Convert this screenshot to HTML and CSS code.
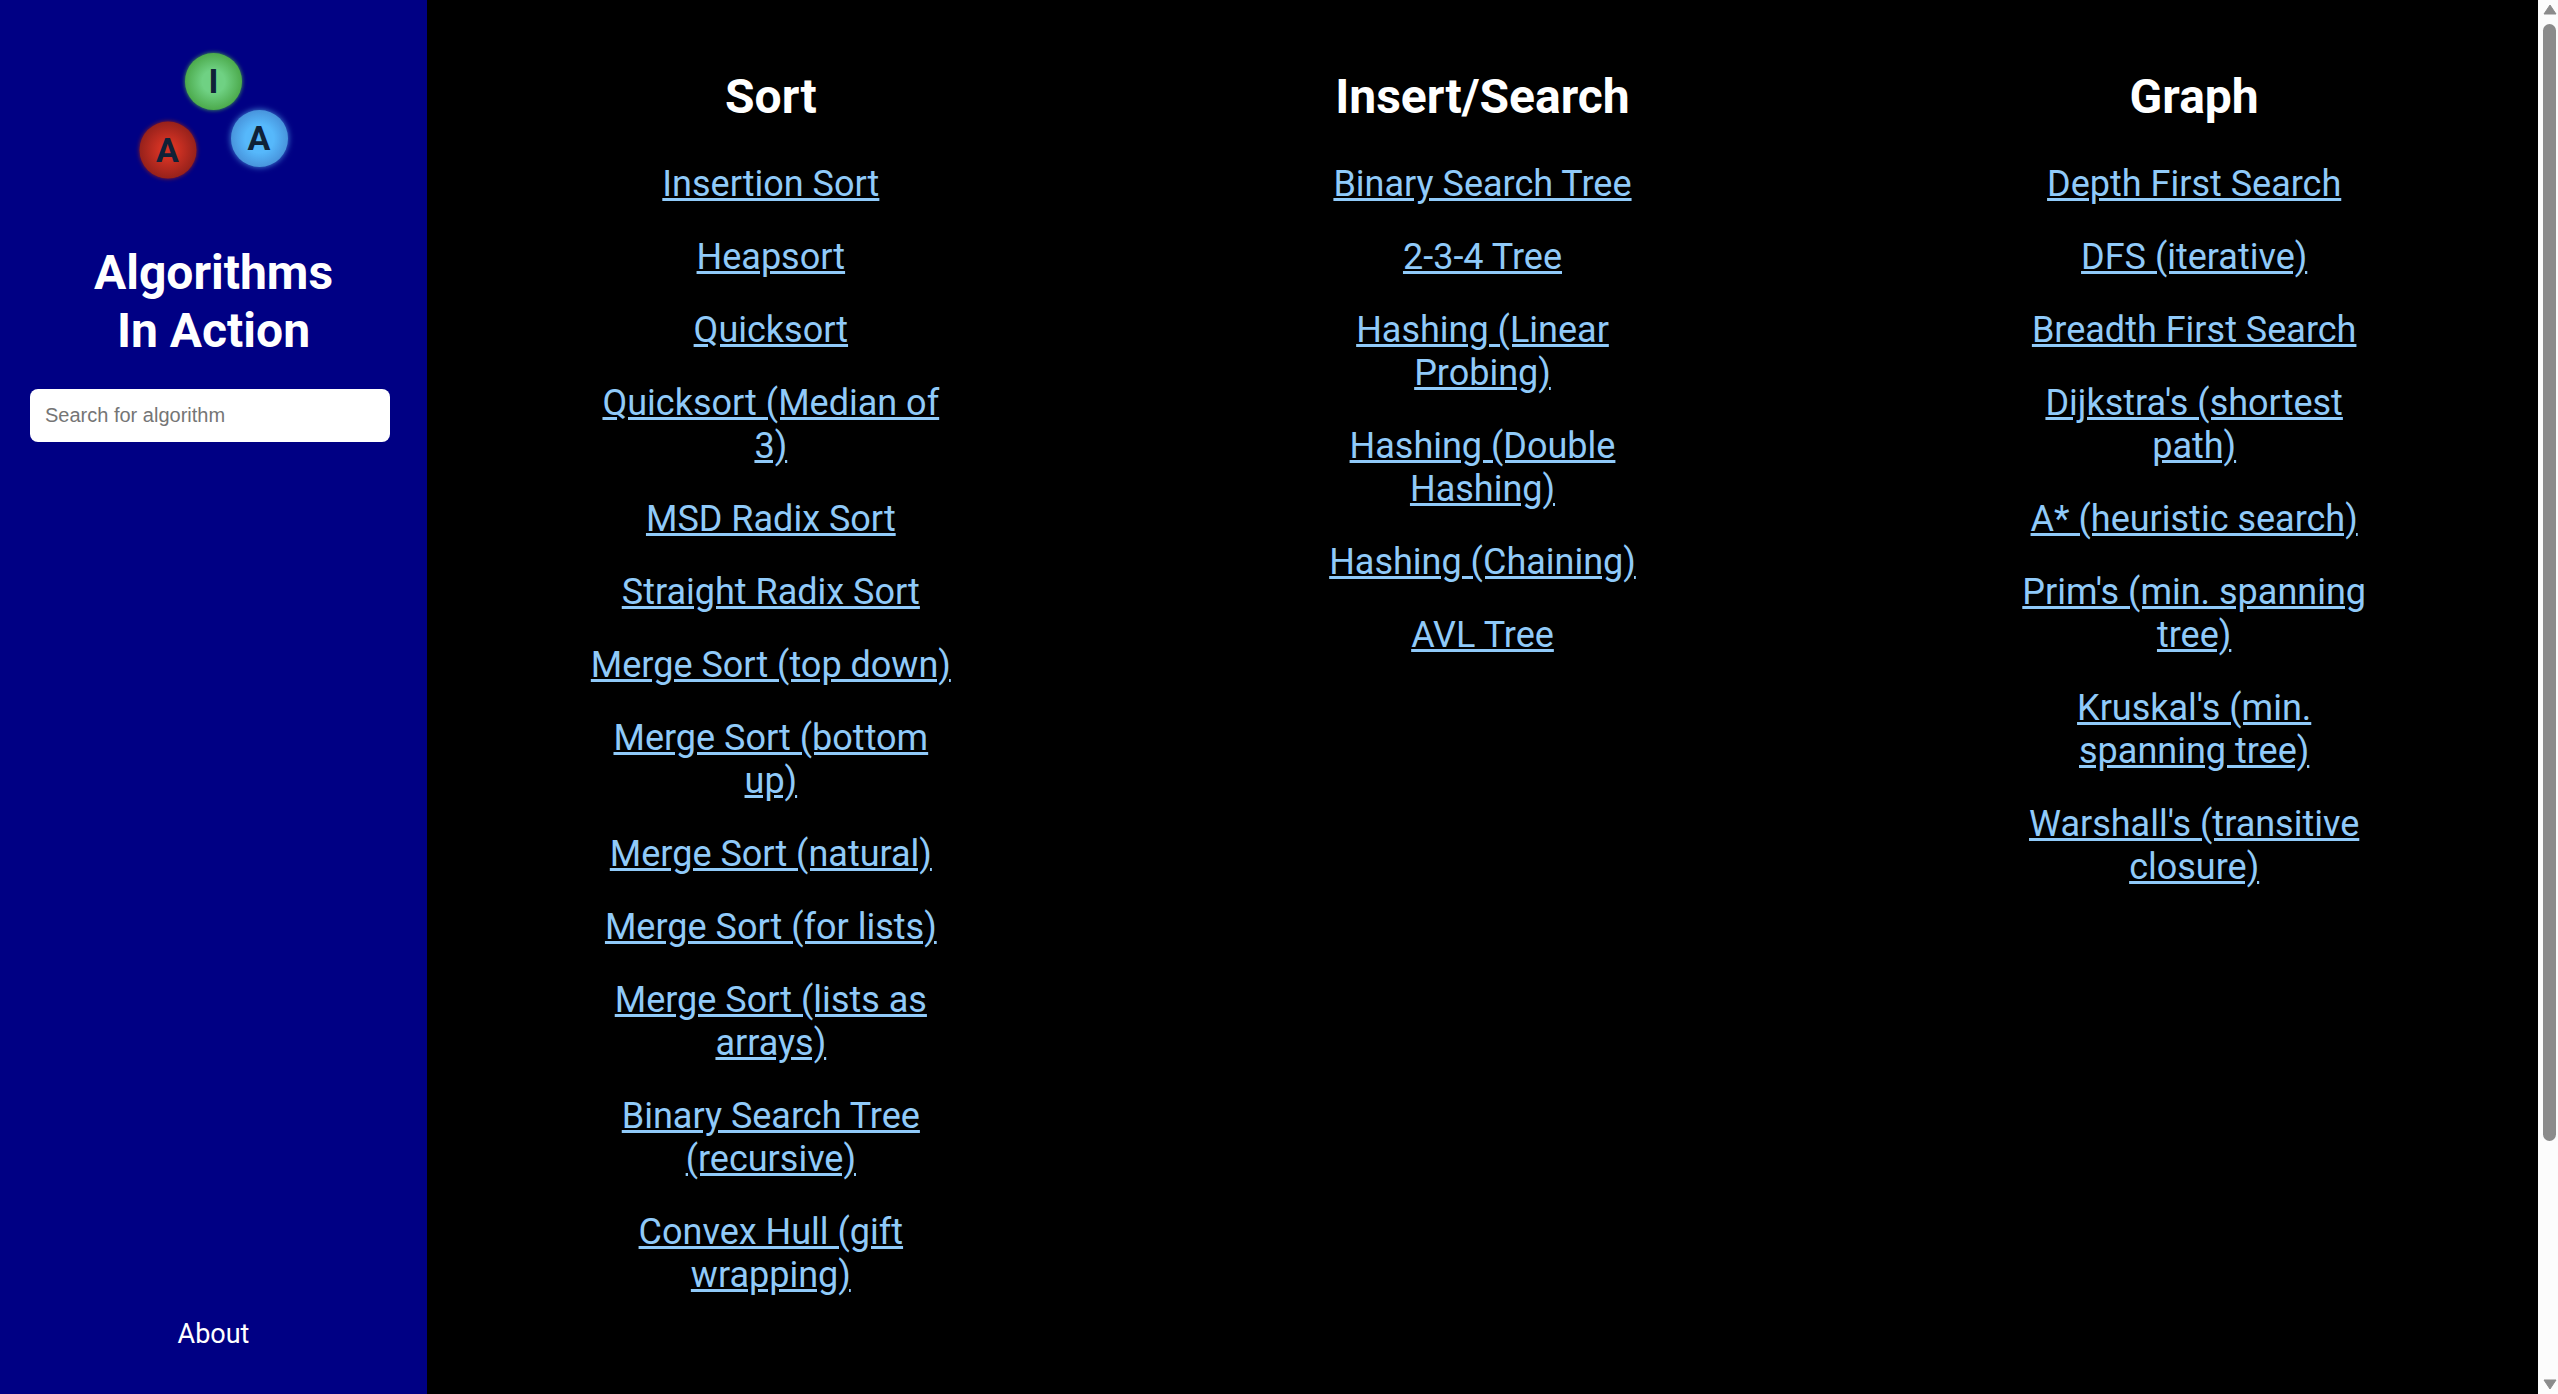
FILE: index.html
```
<!DOCTYPE html>
<html lang="en">
<head>
<meta charset="utf-8">
<title>Algorithms In Action</title>
<link rel="stylesheet" href="styles.css">
</head>
<body>
<div class="app">
  <aside class="sidebar">
    <svg class="logo" viewBox="0 0 160 140" role="img" aria-label="Algorithms In Action">
      <defs>
        <radialGradient id="green"><stop offset=".4" stop-color="#6fd183"/><stop offset="1" stop-color="#4caa4c"/></radialGradient>
        <radialGradient id="red"><stop offset=".3" stop-color="#d23223"/><stop offset="1" stop-color="#96211b"/></radialGradient>
        <radialGradient id="blue"><stop offset=".5" stop-color="#56b8fb"/><stop offset="1" stop-color="#4894dc"/></radialGradient>
      </defs>
      <circle class="ball ball-green" cx="79.500" cy="35.500" r="28.500" fill="url(#green)"/>
      <circle class="ball ball-red" cx="34" cy="104" r="28.500" fill="url(#red)"/>
      <circle class="ball ball-blue" cx="125.500" cy="92.500" r="28.500" fill="url(#blue)"/>
      <text x="79.500" y="47">I</text>
      <text x="33.500" y="115.500">A</text>
      <text x="125" y="104">A</text>
    </svg>
    <h1 class="title">Algorithms<br>In Action</h1>
    <input class="search" type="text" placeholder="Search for algorithm" aria-label="Search for algorithm">
    <a class="about" href="#about">About</a>
  </aside>
  <main class="content">
    <section class="category">
      <h2>Sort</h2>
      <a href="#">Insertion Sort</a>
      <a href="#">Heapsort</a>
      <a href="#">Quicksort</a>
      <a href="#">Quicksort (Median of 3)</a>
      <a href="#">MSD Radix Sort</a>
      <a href="#">Straight Radix Sort</a>
      <a href="#">Merge Sort (top down)</a>
      <a href="#">Merge Sort (bottom up)</a>
      <a href="#">Merge Sort (natural)</a>
      <a href="#">Merge Sort (for lists)</a>
      <a href="#">Merge Sort (lists as arrays)</a>
      <a href="#">Binary Search Tree (recursive)</a>
      <a href="#">Convex Hull (gift wrapping)</a>
    </section>
    <section class="category">
      <h2>Insert/Search</h2>
      <a href="#">Binary Search Tree</a>
      <a href="#">2-3-4 Tree</a>
      <a href="#">Hashing (Linear Probing)</a>
      <a href="#">Hashing (Double Hashing)</a>
      <a href="#">Hashing (Chaining)</a>
      <a href="#">AVL Tree</a>
    </section>
    <section class="category">
      <h2>Graph</h2>
      <a href="#">Depth First Search</a>
      <a href="#">DFS (iterative)</a>
      <a href="#">Breadth First Search</a>
      <a href="#">Dijkstra's (shortest path)</a>
      <a href="#">A* (heuristic search)</a>
      <a href="#">Prim's (min. spanning tree)</a>
      <a href="#">Kruskal's (min. spanning tree)</a>
      <a href="#">Warshall's (transitive closure)</a>
    </section>
  </main>
  <div class="scrollbar" aria-hidden="true">
    <svg class="arrow" viewBox="0 0 14 11"><path d="M7 1 L13 10 H1 Z"/></svg>
    <div class="track"><div class="thumb"></div></div>
    <svg class="arrow" viewBox="0 0 14 11"><path d="M7 10 L13 1 H1 Z"/></svg>
  </div>
</div>
</body>
</html>
```
FILE: styles.css
```
* {
  box-sizing: border-box;
}

body {
  margin: 0;
  background: #000;
  color: #fff;
  font-family: Roboto, "Liberation Sans", sans-serif;
}

.app {
  display: flex;
  height: 100vh;
}

.sidebar {
  flex: 0 0 427px;
  display: flex;
  flex-direction: column;
  align-items: center;
  padding: 46px 30px 44px;
  background: #000084;
}

.logo {
  flex: none;
  width: 160px;
  height: 140px;
  overflow: visible;
}

.logo text {
  fill: #0f2137;
  font-size: 34px;
  font-weight: 700;
  text-anchor: middle;
}

.ball-green {
  filter: drop-shadow(0 0 2px #4caa4c);
}

.ball-red {
  filter: drop-shadow(0 0 2px #96211b);
}

.ball-blue {
  filter: drop-shadow(0 0 3px #4894dc);
}

.title {
  margin: 58px 0 29px;
  font-size: 48px;
  line-height: 58px;
  text-align: center;
}

.search {
  align-self: flex-start;
  width: 98%;
  height: 53px;
  padding: 0 15px;
  border: 0;
  border-radius: 8px;
  background: #fff;
  font-family: "Liberation Sans", Arial, sans-serif;
  font-size: 20px;
}

.search::placeholder {
  color: #757575;
}

.about {
  margin-top: auto;
  color: #fff;
  font-size: 27px;
  line-height: 32px;
  text-decoration: none;
}

.content {
  flex: 1;
  display: grid;
  grid-template-columns: repeat(3, 1fr);
  gap: 344px;
  padding: 68px 160px 0;
  overflow: hidden;
}

.category {
  display: flex;
  flex-direction: column;
  align-items: center;
  gap: 30px;
  text-align: center;
}

.category h2 {
  margin: 0 0 7px;
  font-size: 48px;
  line-height: 58px;
}

.category a {
  color: #90caf9;
  font-size: 36px;
  line-height: 43px;
}

.scrollbar {
  flex: 0 0 20px;
  display: flex;
  flex-direction: column;
  align-items: center;
  padding: 4px 0 4px 3px;
  background: #fcfcfc;
}

.arrow {
  flex: none;
  width: 14px;
  height: 11px;
  fill: #8b8b8b;
  stroke: #8b8b8b;
  stroke-linejoin: round;
}

.track {
  flex: 1;
  width: 13px;
  margin: 9px 0;
}

.thumb {
  height: 83%;
  border-radius: 7px;
  background: #8b8b8b;
}
```
